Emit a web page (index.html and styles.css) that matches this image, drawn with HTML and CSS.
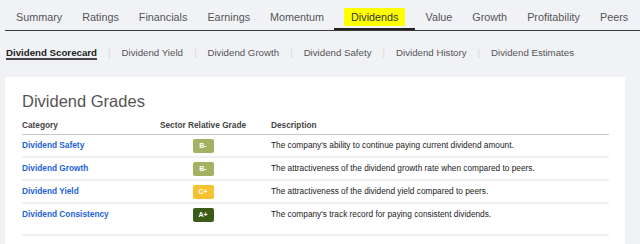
FILE: index.html
```html
<!DOCTYPE html>
<html lang="en">
<head>
    <meta charset="UTF-8">
    <title>Dividend Scorecard</title>
    <link rel="stylesheet" href="styles.css">
</head>
<body>
    <nav class="tabs">
        <a class="tab">Summary</a>
        <a class="tab">Ratings</a>
        <a class="tab">Financials</a>
        <a class="tab">Earnings</a>
        <a class="tab">Momentum</a>
        <a class="tab active"><span class="mark">Dividends</span></a>
        <a class="tab">Value</a>
        <a class="tab">Growth</a>
        <a class="tab">Profitability</a>
        <a class="tab">Peers</a>
    </nav>

    <div class="subtabs">
        <a class="subtab current">Dividend Scorecard</a>
        <span class="sep">|</span>
        <a class="subtab">Dividend Yield</a>
        <span class="sep">|</span>
        <a class="subtab">Dividend Growth</a>
        <span class="sep">|</span>
        <a class="subtab">Dividend Safety</a>
        <span class="sep">|</span>
        <a class="subtab">Dividend History</a>
        <span class="sep">|</span>
        <a class="subtab">Dividend Estimates</a>
    </div>

    <section class="card">
        <h2>Dividend Grades</h2>
        <table class="grades">
            <thead>
                <tr>
                    <th class="col-cat">Category</th>
                    <th class="col-grade">Sector Relative Grade</th>
                    <th class="col-desc">Description</th>
                </tr>
            </thead>
            <tbody>
                <tr>
                    <td class="col-cat"><a>Dividend Safety</a></td>
                    <td class="col-grade"><span class="badge b-minus">B-</span></td>
                    <td class="col-desc">The company's ability to continue paying current dividend amount.</td>
                </tr>
                <tr>
                    <td class="col-cat"><a>Dividend Growth</a></td>
                    <td class="col-grade"><span class="badge b-minus">B-</span></td>
                    <td class="col-desc">The attractiveness of the dividend growth rate when compared to peers.</td>
                </tr>
                <tr>
                    <td class="col-cat"><a>Dividend Yield</a></td>
                    <td class="col-grade"><span class="badge c-plus">C+</span></td>
                    <td class="col-desc">The attractiveness of the dividend yield compared to peers.</td>
                </tr>
                <tr>
                    <td class="col-cat"><a>Dividend Consistency</a></td>
                    <td class="col-grade"><span class="badge a-plus">A+</span></td>
                    <td class="col-desc">The company's track record for paying consistent dividends.</td>
                </tr>
            </tbody>
        </table>
    </section>
</body>
</html>
```

FILE: styles.css
```css
body {
    font-family: "Liberation Sans", Arial, sans-serif;
    margin: 0;
    background: #f1f2f6;
    color: #333;
}

.tabs {
    display: flex;
    margin-left: 5px;
    padding-left: 1px;
    border-bottom: 1px solid #3a3a3a;
}

.tab {
    display: flex;
    align-items: center;
    height: 26px;
    padding: 4px 10px 0;
    font-size: 10.8px;
    color: #555;
}

.tab.active {
    box-shadow: inset 0 -2px 0 #222;
}

.mark {
    display: inline-block;
    background: #ffff00;
    color: #333;
    padding: 0 7px;
    line-height: 18px;
}

.subtabs {
    display: flex;
    padding: 14px 0 0 6px;
    font-size: 9.7px;
    line-height: 16px;
    color: #555;
}

.subtab.current {
    font-weight: bold;
    color: #222;
    text-decoration: underline;
    text-decoration-thickness: 2px;
    text-underline-offset: 2px;
    text-decoration-color: #444;
}

.sep {
    color: #d6d6d6;
    padding: 0 11px;
}

.card {
    background: #fff;
    margin: 16px 0 0 5px;
    width: 587px;
    padding: 14px 16px 8px 17px;
}

h2 {
    margin: 0 0 5px;
    font-size: 16.5px;
    line-height: 20px;
    font-weight: normal;
    color: #555;
}

.grades {
    width: 100%;
    border-collapse: collapse;
    table-layout: fixed;
    font-size: 8.3px;
}

.grades th {
    text-align: left;
    font-weight: bold;
    color: #444;
    line-height: 18px;
    padding: 0;
    border-bottom: 1px solid #c6c6c6;
}

.grades td {
    padding: 0;
    line-height: 21px;
    border-bottom: 2px solid #f0f0f0;
    color: #222;
}

.grades tr:last-child td {
    padding-bottom: 9px;
}

.col-cat {
    width: 128px;
}

.col-grade {
    width: 106px;
    text-align: center !important;
}

.grades .col-desc {
    padding-left: 15px;
}

.grades a {
    color: #1d62d8;
    font-weight: bold;
}

.badge {
    display: inline-block;
    width: 21px;
    height: 14px;
    line-height: 14px;
    border-radius: 2px;
    color: #fff;
    font-size: 7px;
    font-weight: bold;
    vertical-align: middle;
}

.b-minus {
    background: #a3b163;
}

.c-plus {
    background: #f8c22e;
}

.a-plus {
    background: #3c5b16;
}
```
